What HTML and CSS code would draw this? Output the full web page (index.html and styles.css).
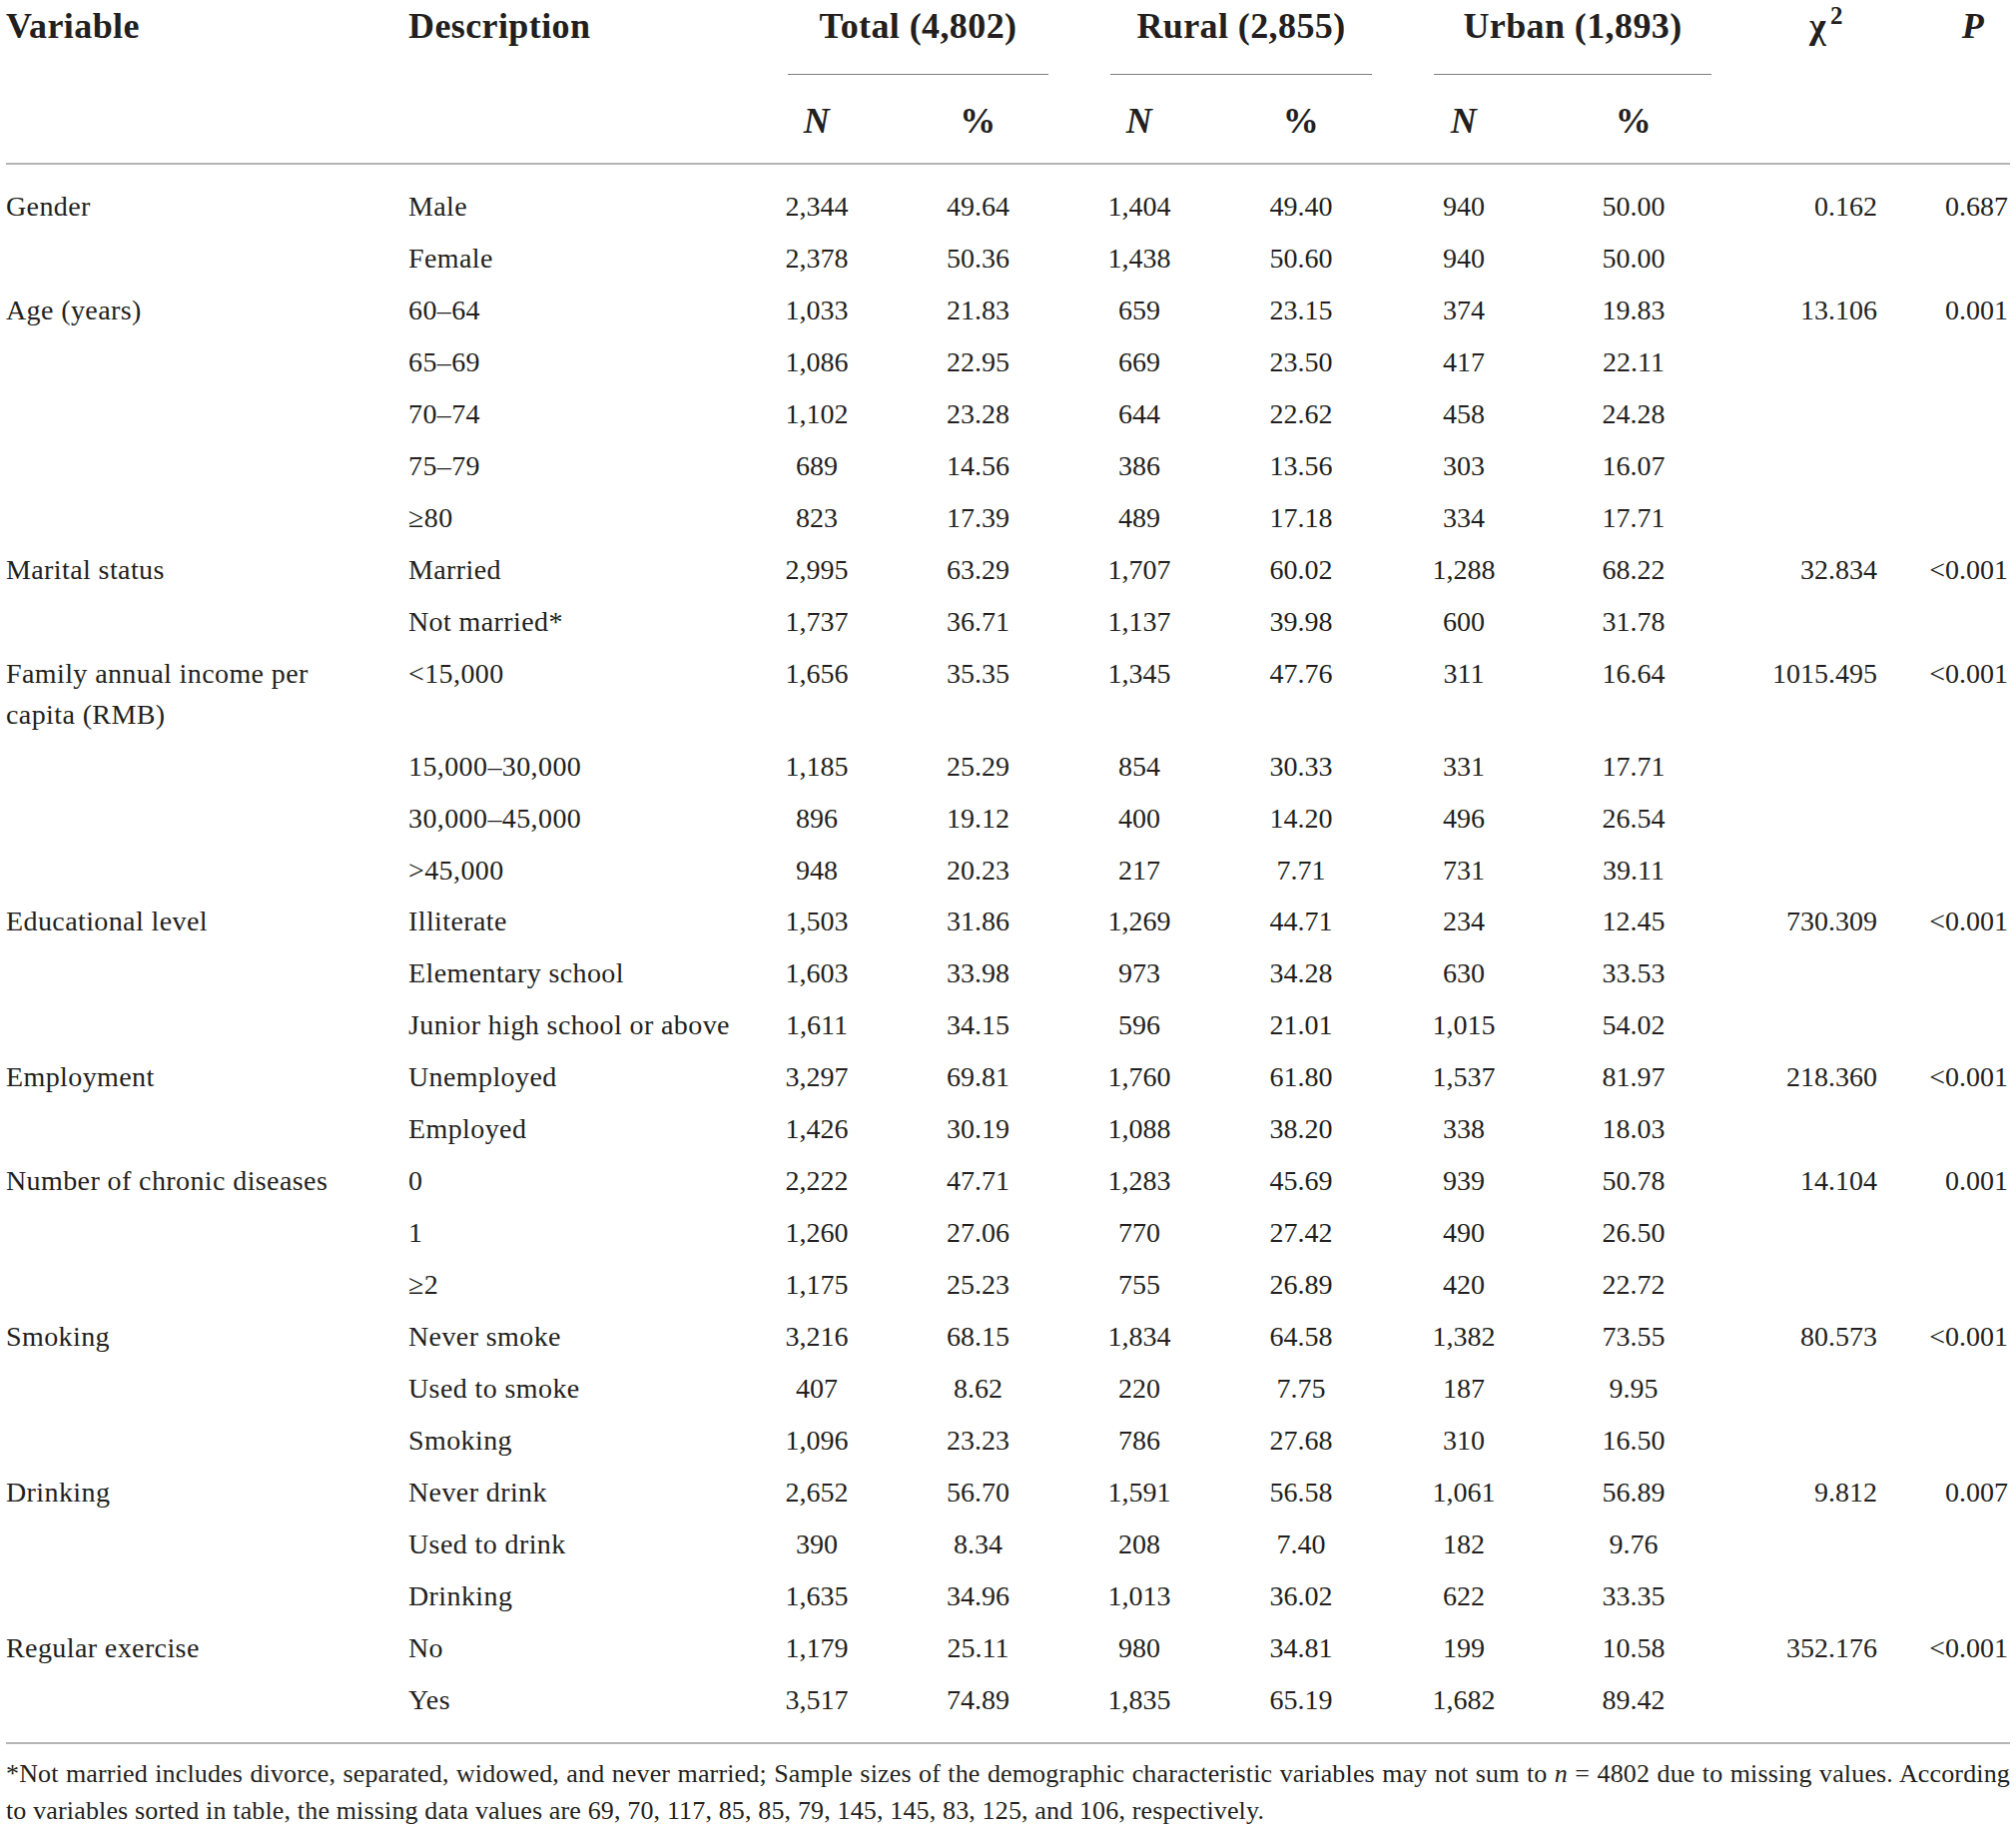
FILE: index.html
```html
<!DOCTYPE html>
<html lang="en">
<head>
<meta charset="utf-8">
<title>Demographic characteristics</title>
<link rel="stylesheet" href="styles.css">
</head>
<body>
<div class="page">
<table class="data">
  <colgroup>
    <col class="c-var"><col class="c-desc">
    <col class="c-tn"><col class="c-tp">
    <col class="c-rn"><col class="c-rp">
    <col class="c-un"><col class="c-up">
    <col class="c-chi"><col class="c-p">
  </colgroup>
  <thead>
    <tr class="h1">
      <th class="left">Variable</th>
      <th class="left desc">Description</th>
      <th colspan="2" class="grp"><div class="grp-line">Total (4,802)</div></th>
      <th colspan="2" class="grp"><div class="grp-line">Rural (2,855)</div></th>
      <th colspan="2" class="grp"><div class="grp-line">Urban (1,893)</div></th>
      <th class="chi"><span class="chi-sym">χ<sup>2</sup></span></th>
      <th class="pv"><i>P</i></th>
    </tr>
    <tr class="h2">
      <th></th><th></th>
      <th><i>N</i></th><th>%</th>
      <th><i>N</i></th><th>%</th>
      <th><i>N</i></th><th>%</th>
      <th></th><th></th>
    </tr>
  </thead>
  <tbody>
    <tr><td class="var">Gender</td><td class="desc">Male</td><td>2,344</td><td>49.64</td><td>1,404</td><td>49.40</td><td>940</td><td>50.00</td><td class="num-r">0.162</td><td class="num-p">0.687</td></tr>
    <tr><td class="var"></td><td class="desc">Female</td><td>2,378</td><td>50.36</td><td>1,438</td><td>50.60</td><td>940</td><td>50.00</td><td class="num-r"></td><td class="num-p"></td></tr>
    <tr><td class="var">Age (years)</td><td class="desc">60–64</td><td>1,033</td><td>21.83</td><td>659</td><td>23.15</td><td>374</td><td>19.83</td><td class="num-r">13.106</td><td class="num-p">0.001</td></tr>
    <tr><td class="var"></td><td class="desc">65–69</td><td>1,086</td><td>22.95</td><td>669</td><td>23.50</td><td>417</td><td>22.11</td><td class="num-r"></td><td class="num-p"></td></tr>
    <tr><td class="var"></td><td class="desc">70–74</td><td>1,102</td><td>23.28</td><td>644</td><td>22.62</td><td>458</td><td>24.28</td><td class="num-r"></td><td class="num-p"></td></tr>
    <tr><td class="var"></td><td class="desc">75–79</td><td>689</td><td>14.56</td><td>386</td><td>13.56</td><td>303</td><td>16.07</td><td class="num-r"></td><td class="num-p"></td></tr>
    <tr><td class="var"></td><td class="desc">≥80</td><td>823</td><td>17.39</td><td>489</td><td>17.18</td><td>334</td><td>17.71</td><td class="num-r"></td><td class="num-p"></td></tr>
    <tr><td class="var">Marital status</td><td class="desc">Married</td><td>2,995</td><td>63.29</td><td>1,707</td><td>60.02</td><td>1,288</td><td>68.22</td><td class="num-r">32.834</td><td class="num-p">&lt;0.001</td></tr>
    <tr><td class="var"></td><td class="desc">Not married*</td><td>1,737</td><td>36.71</td><td>1,137</td><td>39.98</td><td>600</td><td>31.78</td><td class="num-r"></td><td class="num-p"></td></tr>
    <tr><td class="var">Family annual income per<br>capita (RMB)</td><td class="desc">&lt;15,000</td><td>1,656</td><td>35.35</td><td>1,345</td><td>47.76</td><td>311</td><td>16.64</td><td class="num-r">1015.495</td><td class="num-p">&lt;0.001</td></tr>
    <tr><td class="var"></td><td class="desc">15,000–30,000</td><td>1,185</td><td>25.29</td><td>854</td><td>30.33</td><td>331</td><td>17.71</td><td class="num-r"></td><td class="num-p"></td></tr>
    <tr><td class="var"></td><td class="desc">30,000–45,000</td><td>896</td><td>19.12</td><td>400</td><td>14.20</td><td>496</td><td>26.54</td><td class="num-r"></td><td class="num-p"></td></tr>
    <tr><td class="var"></td><td class="desc">&gt;45,000</td><td>948</td><td>20.23</td><td>217</td><td>7.71</td><td>731</td><td>39.11</td><td class="num-r"></td><td class="num-p"></td></tr>
    <tr><td class="var">Educational level</td><td class="desc">Illiterate</td><td>1,503</td><td>31.86</td><td>1,269</td><td>44.71</td><td>234</td><td>12.45</td><td class="num-r">730.309</td><td class="num-p">&lt;0.001</td></tr>
    <tr><td class="var"></td><td class="desc">Elementary school</td><td>1,603</td><td>33.98</td><td>973</td><td>34.28</td><td>630</td><td>33.53</td><td class="num-r"></td><td class="num-p"></td></tr>
    <tr><td class="var"></td><td class="desc">Junior high school or above</td><td>1,611</td><td>34.15</td><td>596</td><td>21.01</td><td>1,015</td><td>54.02</td><td class="num-r"></td><td class="num-p"></td></tr>
    <tr><td class="var">Employment</td><td class="desc">Unemployed</td><td>3,297</td><td>69.81</td><td>1,760</td><td>61.80</td><td>1,537</td><td>81.97</td><td class="num-r">218.360</td><td class="num-p">&lt;0.001</td></tr>
    <tr><td class="var"></td><td class="desc">Employed</td><td>1,426</td><td>30.19</td><td>1,088</td><td>38.20</td><td>338</td><td>18.03</td><td class="num-r"></td><td class="num-p"></td></tr>
    <tr><td class="var">Number of chronic diseases</td><td class="desc">0</td><td>2,222</td><td>47.71</td><td>1,283</td><td>45.69</td><td>939</td><td>50.78</td><td class="num-r">14.104</td><td class="num-p">0.001</td></tr>
    <tr><td class="var"></td><td class="desc">1</td><td>1,260</td><td>27.06</td><td>770</td><td>27.42</td><td>490</td><td>26.50</td><td class="num-r"></td><td class="num-p"></td></tr>
    <tr><td class="var"></td><td class="desc">≥2</td><td>1,175</td><td>25.23</td><td>755</td><td>26.89</td><td>420</td><td>22.72</td><td class="num-r"></td><td class="num-p"></td></tr>
    <tr><td class="var">Smoking</td><td class="desc">Never smoke</td><td>3,216</td><td>68.15</td><td>1,834</td><td>64.58</td><td>1,382</td><td>73.55</td><td class="num-r">80.573</td><td class="num-p">&lt;0.001</td></tr>
    <tr><td class="var"></td><td class="desc">Used to smoke</td><td>407</td><td>8.62</td><td>220</td><td>7.75</td><td>187</td><td>9.95</td><td class="num-r"></td><td class="num-p"></td></tr>
    <tr><td class="var"></td><td class="desc">Smoking</td><td>1,096</td><td>23.23</td><td>786</td><td>27.68</td><td>310</td><td>16.50</td><td class="num-r"></td><td class="num-p"></td></tr>
    <tr><td class="var">Drinking</td><td class="desc">Never drink</td><td>2,652</td><td>56.70</td><td>1,591</td><td>56.58</td><td>1,061</td><td>56.89</td><td class="num-r">9.812</td><td class="num-p">0.007</td></tr>
    <tr><td class="var"></td><td class="desc">Used to drink</td><td>390</td><td>8.34</td><td>208</td><td>7.40</td><td>182</td><td>9.76</td><td class="num-r"></td><td class="num-p"></td></tr>
    <tr><td class="var"></td><td class="desc">Drinking</td><td>1,635</td><td>34.96</td><td>1,013</td><td>36.02</td><td>622</td><td>33.35</td><td class="num-r"></td><td class="num-p"></td></tr>
    <tr><td class="var">Regular exercise</td><td class="desc">No</td><td>1,179</td><td>25.11</td><td>980</td><td>34.81</td><td>199</td><td>10.58</td><td class="num-r">352.176</td><td class="num-p">&lt;0.001</td></tr>
    <tr><td class="var"></td><td class="desc">Yes</td><td>3,517</td><td>74.89</td><td>1,835</td><td>65.19</td><td>1,682</td><td>89.42</td><td class="num-r"></td><td class="num-p"></td></tr>
  </tbody>
</table>
<div class="note">
  <div class="note-line full">*Not married includes divorce, separated, widowed, and never married; Sample sizes of the demographic characteristic variables may not sum to <i>n</i> = 4802 due to missing values. According</div>
  <div class="note-line">to variables sorted in table, the missing data values are 69, 70, 117, 85, 85, 79, 145, 145, 83, 125, and 106, respectively.</div>
</div>
</div>
</body>
</html>
```

FILE: styles.css
```css
html, body {
  margin: 0;
  padding: 0;
  background: #ffffff;
}

body {
  color: #231f20;
  font-family: "Liberation Serif", "Times New Roman", serif;
}

.page {
  padding-left: 6px;
  width: 2007px;
}

.data {
  border-collapse: collapse;
  table-layout: fixed;
  width: 2007px;
}

.c-var { width: 399px; }
.c-desc { width: 332px; }
.c-tn { width: 162px; }
.c-tp { width: 161px; }
.c-rn { width: 162px; }
.c-rp { width: 162px; }
.c-un { width: 164px; }
.c-up { width: 176px; }
.c-chi { width: 156px; }
.c-p { width: 133px; }

th, td {
  padding: 0;
  vertical-align: top;
}

th {
  font-size: 36px;
  font-weight: bold;
  line-height: 42px;
  letter-spacing: 0.4px;
  text-align: center;
  white-space: nowrap;
}

th.left { text-align: left; }
th.desc { padding-left: 4px; }

.h1 th {
  padding-top: 4.5px;
}

.h1 th.grp {
  padding-left: 52px;
  padding-right: 10px;
}

.grp-line {
  padding-bottom: 27.5px;
  border-bottom: 1.5px solid #7f7f7f;
}

.h1 th.chi {
  text-align: right;
  padding-right: 34px;
}

.chi-sym sup {
  font-size: 25px;
  line-height: 0;
  vertical-align: 14px;
  margin-left: 4px;
}

.h1 th.pv {
  text-align: right;
  padding-right: 26px;
}

.h2 th {
  padding-top: 24.5px;
  padding-bottom: 21.2px;
  border-bottom: 2px solid #b4b4b4;
}

td {
  font-size: 28px;
  line-height: 41px;
  padding-top: 5.47px;
  padding-bottom: 5.47px;
  text-align: center;
  white-space: nowrap;
}

td.var {
  text-align: left;
  white-space: normal;
  letter-spacing: 0.4px;
}

td.desc {
  text-align: left;
  padding-left: 4px;
  letter-spacing: 0.4px;
}

td.num-r { text-align: right; }
td.num-p { text-align: right; padding-right: 2px; }

tbody tr:first-child td { padding-top: 21.6px; }
tbody tr:last-child td {
  padding-bottom: 22.5px;
  border-bottom: 2px solid #b4b4b4;
}

.note {
  margin-top: 10.5px;
  font-size: 26px;
  line-height: 37px;
  letter-spacing: 0.15px;
}

.note-line.full {
  text-align: justify;
  text-align-last: justify;
}
```
